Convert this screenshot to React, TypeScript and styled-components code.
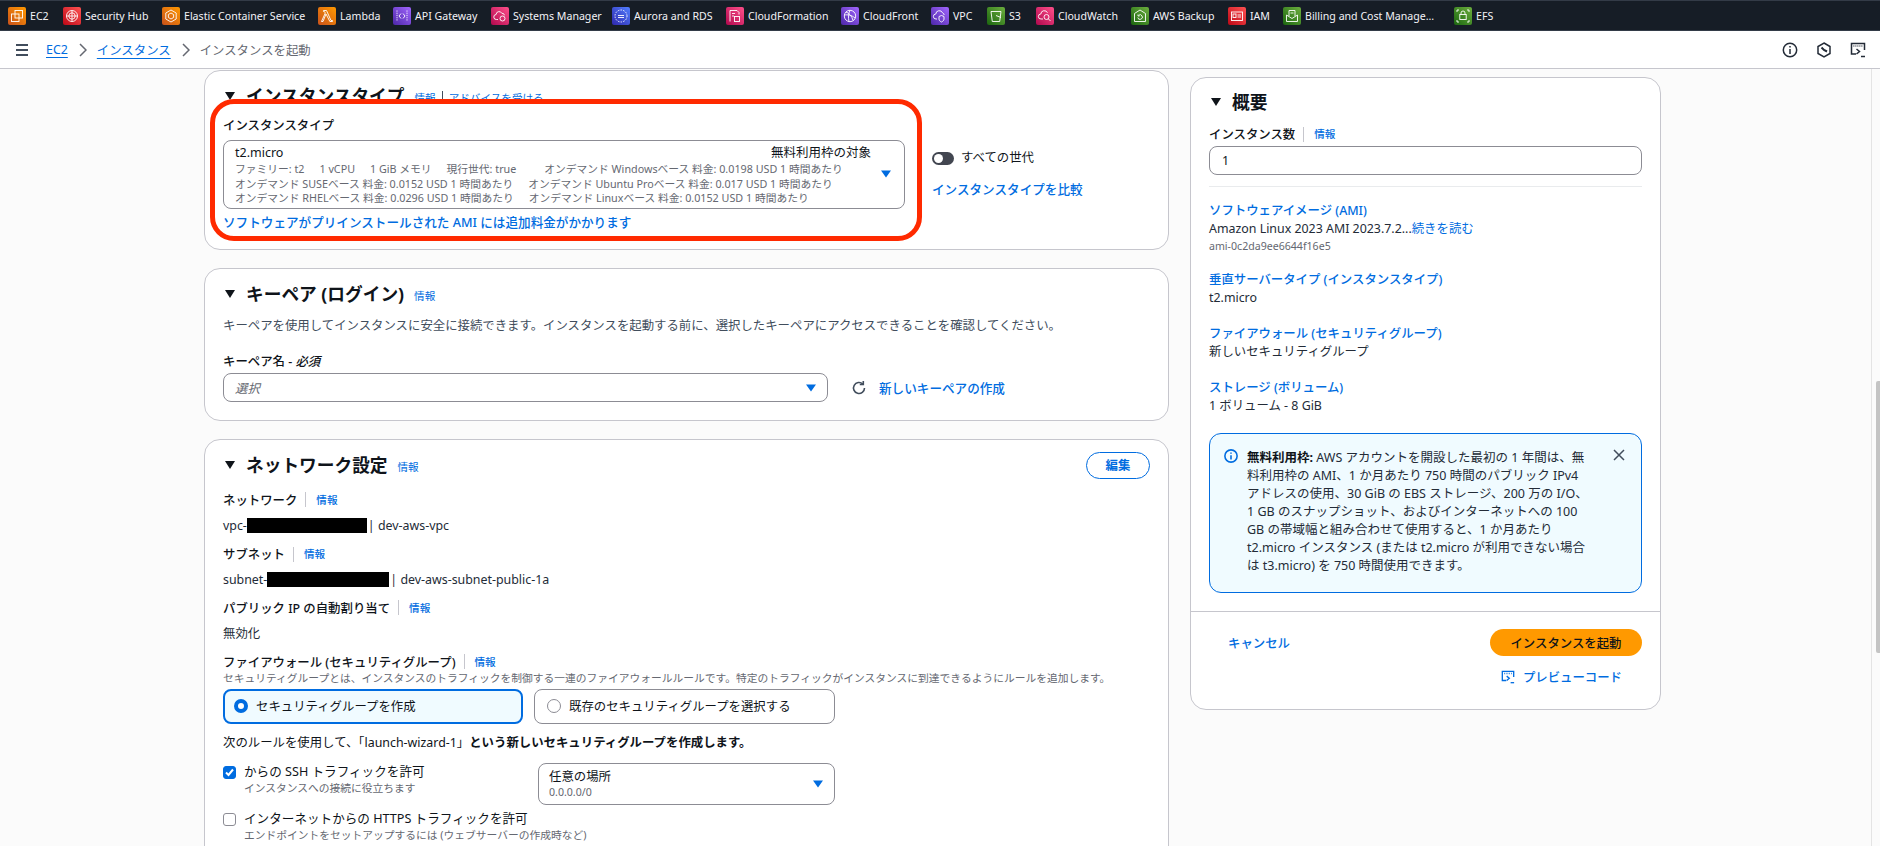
import React from "react";
import styled, { createGlobalStyle } from "styled-components";

const FONT = `"Noto Sans", "Noto Sans CJK JP", sans-serif`;

const Global = createGlobalStyle`
  html, body, #root { margin: 0; height: 100%; overflow: hidden; }
  body {
    font-family: ${FONT};
    font-size: 12.4px;
    color: #0f141a;
    background: #fbfbfb;
  }
`;

const Page = styled.div`
  display: flex;
  flex-direction: column;
  height: 846px;
`;

const NavBar = styled.nav`
  flex: 0 0 31px;
  box-sizing: border-box;
  display: flex;
  align-items: center;
  padding-left: 8px;
  background: #161d26;
  border-top: 1px solid #333b47;
  border-bottom: 1px solid #333b47;
`;

const NavItem = styled.div<{ $w: number }>`
  flex: 0 0 ${(p) => p.$w}px;
  display: flex;
  align-items: center;
  gap: 4px;
  color: #f3f3f7;
  font-size: 10.6px;
  white-space: nowrap;
`;

const Tile = styled.span<{ $from: string; $to: string }>`
  flex: 0 0 18px;
  height: 18px;
  border-radius: 2px;
  background: linear-gradient(45deg, ${(p) => p.$from}, ${(p) => p.$to});
  display: flex;
  svg { display: block; }
`;

const SubBar = styled.header`
  flex: 0 0 38px;
  box-sizing: border-box;
  display: flex;
  align-items: center;
  background: #fff;
  border-bottom: 1px solid #c6c6cd;
  padding: 0 14px 0 15px;
`;

const Burger = styled.svg`
  margin-right: 17px;
`;

const CrumbLink = styled.a`
  color: #006ce0;
  text-decoration: underline;
  text-underline-offset: 3px;
  font-size: 12.4px;
`;

const CrumbSep = styled.svg`
  margin: 0 10px 0 11px;
`;

const CrumbNow = styled.span`
  color: #656871;
  font-size: 12.4px;
`;

const SubTools = styled.div`
  margin-left: auto;
  display: flex;
  align-items: center;
  gap: 18px;
`;

const Main = styled.div`
  flex: 1;
  min-height: 0;
  display: flex;
  overflow: hidden;
`;

const Columns = styled.div`
  flex: 1;
  display: grid;
  grid-template-columns: 965px 471px;
  column-gap: 21px;
  align-items: start;
  padding: 1px 0 0 204px;
`;

const LeftCol = styled.div`
  display: flex;
  flex-direction: column;
  gap: 18px;
`;

const RightCol = styled.div`
  margin-top: 7px;
`;

const Rail = styled.div`
  flex: 0 0 9px;
  box-sizing: border-box;
  border-left: 1px solid #e4e4e4;
  padding: 312px 0 0 4px;
`;

const Thumb = styled.div`
  height: 272px;
  background: #c4c4c4;
  border-radius: 2px 0 0 2px;
`;

const Card = styled.section`
  box-sizing: border-box;
  background: #fff;
  border: 1px solid #c6c6cd;
  border-radius: 16px;
`;

const CardHead = styled.div`
  display: flex;
  align-items: center;
  height: 26px;
  padding: 12px 18px 0 20px;
`;

const Heading = styled.h2`
  margin: 0 0 0 11px;
  font-size: 17.7px;
  line-height: 26px;
  font-weight: 700;
  white-space: nowrap;
`;

const HeadInfo = styled.div`
  display: flex;
  align-items: center;
  margin-left: 10px;
  margin-top: 3px;
  white-space: nowrap;
`;

const InfoA = styled.a`
  color: #006ce0;
  font-size: 10.6px;
  line-height: 14px;
`;

const BarSep = styled.span`
  width: 1px;
  height: 14px;
  background: #414d5c;
  margin: 0 6px;
`;

const EditBtn = styled.button`
  margin-left: auto;
  box-sizing: border-box;
  width: 64px;
  height: 27px;
  padding: 0;
  border: 1.5px solid #006ce0;
  border-radius: 14px;
  background: #fff;
  color: #006ce0;
  font: 700 12.4px ${FONT};
`;

const TypeBody = styled.div`
  display: flex;
  align-items: flex-start;
  padding: 0 0 8px 5px;
  margin-top: -10px;
`;

const Highlight = styled.div`
  position: relative;
  z-index: 1;
  box-sizing: border-box;
  width: 712px;
  height: 142px;
  background: #fff;
  border: 5px solid #ff2a00;
  border-radius: 24px;
  padding: 15px 12px 0 8px;
`;

const Label = styled.div`
  font-size: 12.4px;
  font-weight: 500;
  line-height: 14px;
  white-space: nowrap;
`;

const TypeSelect = styled.div`
  position: relative;
  box-sizing: border-box;
  margin: 7px 0 6px;
  height: 69px;
  border: 1px solid #8c8c94;
  border-radius: 8px;
  padding: 3px 11px;
`;

const TypeTop = styled.div`
  display: flex;
  justify-content: space-between;
  font-size: 12.5px;
  line-height: 18px;
  padding-right: 22px;
`;

const TypeLine = styled.div`
  display: flex;
  gap: 15px;
  color: #656871;
  font-size: 10.75px;
  line-height: 14.5px;
  white-space: nowrap;
`;

const TypeGap = styled.span<{ $m: number }>`
  margin-left: ${(p) => p.$m}px;
`;

const TypeCaret = styled.span`
  position: absolute;
  right: 13px;
  top: 29px;
  display: flex;
`;

const StrongLink = styled.a`
  display: block;
  color: #006ce0;
  font-size: 12.6px;
  font-weight: 500;
  line-height: 16px;
  white-space: nowrap;
`;

const TypeSide = styled.div`
  margin: 50px 0 0 10px;
  display: flex;
  flex-direction: column;
`;

const ToggleRow = styled.div`
  display: flex;
  align-items: center;
  gap: 7px;
  font-size: 12.4px;
  line-height: 18px;
  margin-bottom: 15px;
`;

const Toggle = styled.span`
  box-sizing: border-box;
  width: 22px;
  height: 13px;
  border-radius: 7px;
  background: #424650;
  padding: 2px;
  display: flex;
  &::before {
    content: "";
    width: 9px;
    height: 9px;
    border-radius: 50%;
    background: #fff;
  }
`;

const Body = styled.div`
  padding: 0 18px 18px 18px;
`;

const Desc = styled.p`
  margin: 9px 0 0;
  font-size: 12.4px;
  line-height: 20px;
  color: #414d5c;
  white-space: nowrap;
`;

const FieldLabel = styled.div<{ $mt?: number }>`
  display: flex;
  align-items: center;
  height: 20px;
  margin-top: ${(p) => p.$mt ?? 0}px;
  font-size: 12.4px;
  font-weight: 500;
  white-space: pre;
`;

const FieldSep = styled.span`
  width: 1px;
  height: 15px;
  background: #c6c6cd;
  margin: 0 10px 0 8px;
`;

const Required = styled.i`
  font-weight: 500;
`;

const KeyRow = styled.div`
  display: flex;
  align-items: center;
  margin-top: 2px;
`;

const PlainSelect = styled.div`
  box-sizing: border-box;
  width: 605px;
  height: 29px;
  border: 1px solid #8c8c94;
  border-radius: 8px;
  padding: 0 11px;
  display: flex;
  align-items: center;
  justify-content: space-between;
  color: #656871;
  font-style: italic;
  font-size: 12.4px;
`;

const RefreshLink = styled.a`
  display: flex;
  align-items: center;
  gap: 12px;
  margin-left: 23px;
  color: #006ce0;
  font-size: 12.6px;
  font-weight: 500;
  white-space: nowrap;
`;

const Value = styled.div`
  display: flex;
  align-items: center;
  height: 20px;
  margin-top: 5.5px;
  font-size: 12.4px;
  color: #232b37;
  white-space: pre;
`;

const Redact = styled.span<{ $w: number }>`
  width: ${(p) => p.$w}px;
  height: 15px;
  margin-right: 1px;
  background: #000;
`;

const Help = styled.div`
  font-size: 10.75px;
  line-height: 16px;
  color: #656871;
  white-space: nowrap;
`;

const RadioRow = styled.div`
  display: flex;
  gap: 11px;
  margin-top: 3px;
`;

const RadioCard = styled.div<{ $on?: boolean; $w: number }>`
  box-sizing: border-box;
  width: ${(p) => p.$w}px;
  height: 35px;
  display: flex;
  align-items: center;
  gap: 8px;
  padding-left: ${(p) => (p.$on ? 9 : 12)}px;
  border: ${(p) => (p.$on ? "2px solid #006ce0" : "1px solid #8c8c94")};
  border-radius: 8px;
  background: ${(p) => (p.$on ? "#f0fbff" : "#fff")};
  font-size: 12.4px;
  white-space: nowrap;
`;

const RadioDot = styled.span<{ $on?: boolean }>`
  box-sizing: border-box;
  width: 14px;
  height: 14px;
  border-radius: 50%;
  border: ${(p) => (p.$on ? "4px solid #006ce0" : "1px solid #8c8c94")};
  background: #fff;
`;

const RuleText = styled.p`
  margin: 9px 0 0;
  font-size: 12.4px;
  line-height: 20px;
  white-space: nowrap;
  b { font-weight: 700; }
`;

const SshRow = styled.div`
  display: flex;
  align-items: flex-start;
  margin-top: 9px;
`;

const CheckLine = styled.div`
  display: flex;
  gap: 8px;
  flex: 0 0 315px;
`;

const CheckBox = styled.span<{ $on?: boolean }>`
  box-sizing: border-box;
  flex: 0 0 13px;
  width: 13px;
  height: 13px;
  margin-top: 4px;
  border-radius: 3px;
  border: 1px solid ${(p) => (p.$on ? "#006ce0" : "#8c8c94")};
  background: ${(p) => (p.$on ? "#006ce0" : "#fff")};
  display: flex;
`;

const CheckText = styled.div`
  font-size: 12.6px;
  line-height: 20px;
  white-space: nowrap;
`;

const HelpTight = styled(Help)`
  margin-top: -2px;
`;

const RuleSelect = styled.div`
  box-sizing: border-box;
  width: 297px;
  height: 42px;
  margin-top: 1px;
  border: 1px solid #8c8c94;
  border-radius: 8px;
  padding: 4px 11px 4px 10px;
  display: flex;
  align-items: center;
  justify-content: space-between;
`;

const RuleSelectMain = styled.div`
  font-size: 12.4px;
  line-height: 17px;
`;

const RuleSelectSub = styled.div`
  font-size: 10.6px;
  line-height: 15px;
  color: #656871;
`;

const HttpsLine = styled(CheckLine)`
  margin-top: 4px;
`;

const SumCard = styled(Card)`
  height: 633px;
`;

const SumHead = styled(CardHead)`
  padding-top: 11px;
`;

const SumBody = styled.div`
  padding: 9px 18px 0;
`;

const NumInput = styled.div`
  box-sizing: border-box;
  height: 29px;
  margin-top: 2px;
  border: 1px solid #8c8c94;
  border-radius: 8px;
  padding: 0 12px;
  display: flex;
  align-items: center;
  font-size: 12.4px;
`;

const Divider = styled.hr`
  margin: 11px 0 15px;
  border: 0;
  border-top: 1px solid #e9ebed;
`;

const SumGroup = styled.div`
  margin-bottom: 17.5px;
`;

const SumLink = styled.a`
  display: block;
  color: #006ce0;
  font-size: 12.4px;
  font-weight: 500;
  line-height: 18.5px;
  white-space: nowrap;
`;

const SumValue = styled.div`
  margin-top: -0.5px;
  font-size: 12.4px;
  line-height: 18.5px;
  color: #232b37;
  white-space: nowrap;
  a { color: #006ce0; }
`;

const SumSub = styled.div`
  font-size: 10.6px;
  line-height: 15px;
  color: #656871;
`;

const Alert = styled.div`
  box-sizing: border-box;
  height: 160px;
  margin-top: 17.5px;
  padding: 15px 16px 0 14px;
  display: flex;
  background: #f0fbff;
  border: 1px solid #006ce0;
  border-radius: 12px;
`;

const AlertIcon = styled.svg`
  flex: 0 0 14px;
  margin: 0 9px 0 0;
`;

const AlertText = styled.div`
  flex: 1;
  font-size: 12.5px;
  line-height: 18px;
  color: #232b37;
  white-space: nowrap;
  b { font-weight: 700; color: #0f141a; }
`;

const SumFoot = styled.div`
  margin-top: 18px;
  border-top: 1px solid #c6c6cd;
  padding: 17px 18px 0 37px;
`;

const FootRow = styled.div`
  display: flex;
  align-items: center;
  justify-content: space-between;
`;

const CancelA = styled.a`
  color: #006ce0;
  font-size: 12.4px;
  font-weight: 500;
`;

const LaunchBtn = styled.button`
  width: 152px;
  height: 27px;
  padding: 0;
  border: 0;
  border-radius: 14px;
  background: #ff9900;
  color: #0f141a;
  font: 500 12.4px ${FONT};
`;

const PreviewA = styled.a`
  display: flex;
  justify-content: flex-end;
  align-items: center;
  gap: 8px;
  margin: 12px 20px 0 0;
  color: #006ce0;
  font-size: 12.4px;
  font-weight: 500;
`;

const Tri = () => (
  <svg width="10" height="8" viewBox="0 0 10 8"><path d="M0 0h10L5 8z" fill="#0f141a" /></svg>
);

const Caret = () => (
  <svg width="10" height="8" viewBox="0 0 10 8"><path d="M0 0.5h10L5 7.5z" fill="#006ce0" /></svg>
);

const Shell = ({ color, size = 16 }: { color: string; size?: number }) => (
  <svg width={size} height={size} viewBox="0 0 16 16" fill="none" stroke={color} strokeWidth="1.5">
    <path d="M6 12H1.5V1.5h13V8" />
    <path d="M3.5 4h.8M5.5 4h.8M7.5 4h.8M9.5 4h.8M11.5 4h.8" />
    <path d="M6.5 7l3 2.5-3 2.5" />
    <path d="M11 14.5h4" />
  </svg>
);

type G = { from: string; to: string };
const orange: G = { from: "#c8511b", to: "#ff9900" };
const red: G = { from: "#bd0816", to: "#ff5252" };
const pink: G = { from: "#b0084d", to: "#ff4f8b" };
const purple: G = { from: "#4d27a8", to: "#a166ff" };
const blue: G = { from: "#2e27ad", to: "#527fff" };
const green: G = { from: "#1b660f", to: "#6cae3e" };

const glyphs: Record<string, React.ReactNode> = {
  ec2: (<><rect x="7" y="3.5" width="7.5" height="7.5" /><rect x="3.5" y="7" width="7.5" height="7.5" /></>),
  hub: (<><circle cx="9" cy="9" r="5.5" /><circle cx="9" cy="9" r="3.2" /><path d="M9 3.5v11M3.5 9h11" /></>),
  ecs: (<><path d="M9 3l5.2 3v6L9 15l-5.2-3V6z" /><path d="M9 6l2.6 1.5v3L9 12l-2.6-1.5v-3z" /></>),
  lambda: (<path d="M5.5 3.5h3l4.5 10h1.5v1h-2.6L8 7l-3 7.500H3.500L7.300 6 6.400 4.500h-.9z" />),
  api: (<><path d="M4 3.500v11M14 3.500v11" strokeDasharray="1.200 1" /><path d="M8 6.500L6 9l2 2.500M10 6.500l2 2.500-2 2.500" /></>),
  ssm: (<><path d="M7 12.500H5.500a2.500 2.500 0 0 1-.4-5 3 3 0 0 1 5.700-1.200 2.500 2.500 0 0 1 2.700 2" /><circle cx="11.500" cy="11.500" r="2.500" /></>),
  rds: (<><circle cx="9" cy="9" r="6" strokeDasharray="1.500 1.200" /><path d="M6 8.500h6M6 10.500h6" /></>),
  cfn: (<><path d="M4 14.500V3.500h7l2 2v2" /><path d="M6 6.500h3M6 9h2" /><rect x="8.500" y="9.500" width="5" height="5" /></>),
  cfr: (<><circle cx="9" cy="9" r="5.700" /><path d="M5 5c3 1 6 4 7 8.500M9 3.300c-1.500 3-2 7-1 11.400M3.500 8c3-.5 7 0 10.500 3" /></>),
  vpc: (<><path d="M6 12H5a2.500 2.500 0 0 1-.2-5 3.500 3.500 0 0 1 6.700-1.200 2.500 2.500 0 0 1 1.700 2.200" /><path d="M10.500 8.500l2.500 1v2.500c0 1.300-1 2.300-2.500 3-1.500-.7-2.500-1.700-2.500-3V9.500z" /></>),
  s3: (<><path d="M4 4.500h10l-1.300 10H5.300z" /><path d="M9 8.500l5 2" /></>),
  cw: (<><path d="M7 12H5a2.500 2.500 0 0 1-.2-5 3.500 3.500 0 0 1 6.700-1.200" /><circle cx="10.500" cy="10" r="2.500" /><path d="M12.300 11.800l2.200 2.200" /></>),
  backup: (<><path d="M9 3l5.500 3.500V14.500h-11V6.500z" /><path d="M6.800 10.500a2.300 2.300 0 1 0 .8-2.200M7 7.500v1.500h1.500" /></>),
  iam: (<><rect x="3.500" y="5" width="11" height="8.500" /><rect x="5" y="7" width="3" height="3.500" /><path d="M9.500 8h3.500M9.500 10h3.500" /></>),
  bill: (<><path d="M3.500 8v6.500h11V8L9 11.500z" /><path d="M6 9V3.500h6V9M7.500 6h3" /></>),
  efs: (<><path d="M3 3h2M13 3h2M3 15h2M13 15h2M3 3v2M15 3v2M3 13v2M15 13v2" /><rect x="5.800" y="7.500" width="6.400" height="5" /><path d="M7 7.500V6a2 2 0 0 1 4 0v1.500" /></>),
};

const services: { t: string; g: G; k: string; w: number }[] = [
  { t: "EC2", g: orange, k: "ec2", w: 55 },
  { t: "Security Hub", g: red, k: "hub", w: 99 },
  { t: "Elastic Container Service", g: orange, k: "ecs", w: 156 },
  { t: "Lambda", g: orange, k: "lambda", w: 75 },
  { t: "API Gateway", g: purple, k: "api", w: 98 },
  { t: "Systems Manager", g: pink, k: "ssm", w: 121 },
  { t: "Aurora and RDS", g: blue, k: "rds", w: 114 },
  { t: "CloudFormation", g: pink, k: "cfn", w: 115 },
  { t: "CloudFront", g: purple, k: "cfr", w: 90 },
  { t: "VPC", g: purple, k: "vpc", w: 56 },
  { t: "S3", g: green, k: "s3", w: 49 },
  { t: "CloudWatch", g: pink, k: "cw", w: 95 },
  { t: "AWS Backup", g: green, k: "backup", w: 97 },
  { t: "IAM", g: red, k: "iam", w: 55 },
  { t: "Billing and Cost Manage...", g: green, k: "bill", w: 171 },
  { t: "EFS", g: green, k: "efs", w: 50 },
];

const Chevron = () => (
  <CrumbSep width="8" height="14" viewBox="0 0 8 14" fill="none" stroke="#656871" strokeWidth="1.5">
    <path d="M1 1l6 6-6 6" />
  </CrumbSep>
);

export default function App() {
  return (
    <Page>
      <Global />
      <NavBar>
        {services.map((s) => (
          <NavItem key={s.t} $w={s.w}>
            <Tile $from={s.g.from} $to={s.g.to}>
              <svg width="18" height="18" viewBox="0 0 18 18" fill="none" stroke="#fff" strokeWidth="0.9">
                {glyphs[s.k]}
              </svg>
            </Tile>
            {s.t}
          </NavItem>
        ))}
      </NavBar>
      <SubBar>
        <Burger width="14" height="12" viewBox="0 0 14 12" fill="none" stroke="#414d5c" strokeWidth="2">
          <path d="M1 1h12M1 6h12M1 11h12" />
        </Burger>
        <CrumbLink>EC2</CrumbLink>
        <Chevron />
        <CrumbLink>インスタンス</CrumbLink>
        <Chevron />
        <CrumbNow>インスタンスを起動</CrumbNow>
        <SubTools>
          <svg width="16" height="16" viewBox="0 0 16 16" fill="none" stroke="#232b37" strokeWidth="1.5">
            <circle cx="8" cy="8" r="6.700" />
            <path d="M8 7v5M8 4v1.500" />
          </svg>
          <svg width="16" height="16" viewBox="0 0 16 16" fill="none" stroke="#232b37" strokeWidth="1.5">
            <path d="M8 1l6 3.500v7L8 15l-6-3.500v-7z" />
            <path d="M5.500 5.500L8 8l3 1.500" strokeWidth="2" />
          </svg>
          <Shell color="#232b37" />
        </SubTools>
      </SubBar>
      <Main>
        <Columns>
          <LeftCol>
            <Card>
              <CardHead>
                <Tri />
                <Heading>インスタンスタイプ</Heading>
                <HeadInfo>
                  <InfoA>情報</InfoA>
                  <BarSep />
                  <InfoA>アドバイスを受ける</InfoA>
                </HeadInfo>
              </CardHead>
              <TypeBody>
                <Highlight>
                  <Label>インスタンスタイプ</Label>
                  <TypeSelect>
                    <TypeTop>
                      <span>t2.micro</span>
                      <span>無料利用枠の対象</span>
                    </TypeTop>
                    <TypeLine>
                      <span>ファミリー: t2</span>
                      <span>1 vCPU</span>
                      <span>1 GiB メモリ</span>
                      <span>現行世代: true</span>
                      <TypeGap $m={13}>オンデマンド Windowsベース 料金: 0.0198 USD 1 時間あたり</TypeGap>
                    </TypeLine>
                    <TypeLine>
                      <span>オンデマンド SUSEベース 料金: 0.0152 USD 1 時間あたり</span>
                      <span>オンデマンド Ubuntu Proベース 料金: 0.017 USD 1 時間あたり</span>
                    </TypeLine>
                    <TypeLine>
                      <span>オンデマンド RHELベース 料金: 0.0296 USD 1 時間あたり</span>
                      <span>オンデマンド Linuxベース 料金: 0.0152 USD 1 時間あたり</span>
                    </TypeLine>
                    <TypeCaret><Caret /></TypeCaret>
                  </TypeSelect>
                  <StrongLink>ソフトウェアがプリインストールされた AMI には追加料金がかかります</StrongLink>
                </Highlight>
                <TypeSide>
                  <ToggleRow>
                    <Toggle />
                    すべての世代
                  </ToggleRow>
                  <StrongLink>インスタンスタイプを比較</StrongLink>
                </TypeSide>
              </TypeBody>
            </Card>

            <Card>
              <CardHead>
                <Tri />
                <Heading>キーペア (ログイン)</Heading>
                <HeadInfo><InfoA>情報</InfoA></HeadInfo>
              </CardHead>
              <Body>
                <Desc>キーペアを使用してインスタンスに安全に接続できます。インスタンスを起動する前に、選択したキーペアにアクセスできることを確認してください。</Desc>
                <FieldLabel $mt={15}>キーペア名 - <Required>必須</Required></FieldLabel>
                <KeyRow>
                  <PlainSelect>
                    選択
                    <Caret />
                  </PlainSelect>
                  <RefreshLink>
                    <svg width="16" height="16" viewBox="0 0 16 16" fill="none" stroke="#414d5c" strokeWidth="1.6">
                      <path d="M13.500 8a5.500 5.500 0 1 1-1.700-4" />
                      <path d="M12.300 1v3.500H8.800" />
                    </svg>
                    新しいキーペアの作成
                  </RefreshLink>
                </KeyRow>
              </Body>
            </Card>

            <Card>
              <CardHead>
                <Tri />
                <Heading>ネットワーク設定</Heading>
                <HeadInfo><InfoA>情報</InfoA></HeadInfo>
                <EditBtn>編集</EditBtn>
              </CardHead>
              <Body>
                <FieldLabel $mt={11.5}>ネットワーク<FieldSep /><InfoA>情報</InfoA></FieldLabel>
                <Value>vpc-<Redact $w={120} />| dev-aws-vpc</Value>
                <FieldLabel $mt={9}>サブネット<FieldSep /><InfoA>情報</InfoA></FieldLabel>
                <Value>subnet-<Redact $w={122} />| dev-aws-subnet-public-1a</Value>
                <FieldLabel $mt={8}>パブリック IP の自動割り当て<FieldSep /><InfoA>情報</InfoA></FieldLabel>
                <Value>無効化</Value>
                <FieldLabel $mt={8.5}>ファイアウォール (セキュリティグループ)<FieldSep /><InfoA>情報</InfoA></FieldLabel>
                <HelpTight>セキュリティグループとは、インスタンスのトラフィックを制御する一連のファイアウォールルールです。特定のトラフィックがインスタンスに到達できるようにルールを追加します。</HelpTight>
                <RadioRow>
                  <RadioCard $on $w={300}><RadioDot $on />セキュリティグループを作成</RadioCard>
                  <RadioCard $w={301}><RadioDot />既存のセキュリティグループを選択する</RadioCard>
                </RadioRow>
                <RuleText>次のルールを使用して、「launch-wizard-1」<b>という新しいセキュリティグループを作成します。</b></RuleText>
                <SshRow>
                  <CheckLine>
                    <CheckBox $on>
                      <svg width="11" height="11" viewBox="0 0 11 11" fill="none" stroke="#fff" strokeWidth="2">
                        <path d="M2 5.500l2.500 2.500 4.500-5.500" />
                      </svg>
                    </CheckBox>
                    <div>
                      <CheckText>からの SSH トラフィックを許可</CheckText>
                      <HelpTight>インスタンスへの接続に役立ちます</HelpTight>
                    </div>
                  </CheckLine>
                  <RuleSelect>
                    <div>
                      <RuleSelectMain>任意の場所</RuleSelectMain>
                      <RuleSelectSub>0.0.0.0/0</RuleSelectSub>
                    </div>
                    <Caret />
                  </RuleSelect>
                </SshRow>
                <HttpsLine>
                  <CheckBox />
                  <div>
                    <CheckText>インターネットからの HTTPS トラフィックを許可</CheckText>
                    <HelpTight>エンドポイントをセットアップするには (ウェブサーバーの作成時など)</HelpTight>
                  </div>
                </HttpsLine>
              </Body>
            </Card>
          </LeftCol>

          <RightCol>
            <SumCard>
              <SumHead>
                <Tri />
                <Heading>概要</Heading>
              </SumHead>
              <SumBody>
                <FieldLabel>インスタンス数<FieldSep /><InfoA>情報</InfoA></FieldLabel>
                <NumInput>1</NumInput>
                <Divider />
                <SumGroup>
                  <SumLink>ソフトウェアイメージ (AMI)</SumLink>
                  <SumValue>Amazon Linux 2023 AMI 2023.7.2...<a>続きを読む</a></SumValue>
                  <SumSub>ami-0c2da9ee6644f16e5</SumSub>
                </SumGroup>
                <SumGroup>
                  <SumLink>垂直サーバータイプ (インスタンスタイプ)</SumLink>
                  <SumValue>t2.micro</SumValue>
                </SumGroup>
                <SumGroup>
                  <SumLink>ファイアウォール (セキュリティグループ)</SumLink>
                  <SumValue>新しいセキュリティグループ</SumValue>
                </SumGroup>
                <SumLink>ストレージ (ボリューム)</SumLink>
                <SumValue>1 ボリューム - 8 GiB</SumValue>
                <Alert>
                  <AlertIcon width="14" height="14" viewBox="0 0 16 16" fill="none" stroke="#006ce0" strokeWidth="1.8">
                    <circle cx="8" cy="8" r="7" />
                    <path d="M8 7v5M8 4v1.500" />
                  </AlertIcon>
                  <AlertText>
                    <b>無料利用枠:</b> AWS アカウントを開設した最初の 1 年間は、無<br />
                    料利用枠の AMI、1 か月あたり 750 時間のパブリック IPv4<br />
                    アドレスの使用、30 GiB の EBS ストレージ、200 万の I/O、<br />
                    1 GB のスナップショット、およびインターネットへの 100<br />
                    GB の帯域幅と組み合わせて使用すると、1 か月あたり<br />
                    t2.micro インスタンス (または t2.micro が利用できない場合<br />
                    は t3.micro) を 750 時間使用できます。
                  </AlertText>
                  <svg width="12" height="12" viewBox="0 0 12 12" fill="none" stroke="#414d5c" strokeWidth="1.500">
                    <path d="M1 1l10 10M11 1L1 11" />
                  </svg>
                </Alert>
              </SumBody>
              <SumFoot>
                <FootRow>
                  <CancelA>キャンセル</CancelA>
                  <LaunchBtn>インスタンスを起動</LaunchBtn>
                </FootRow>
                <PreviewA>
                  <Shell color="#006ce0" size={14} />
                  プレビューコード
                </PreviewA>
              </SumFoot>
            </SumCard>
          </RightCol>
        </Columns>
        <Rail><Thumb /></Rail>
      </Main>
    </Page>
  );
}
